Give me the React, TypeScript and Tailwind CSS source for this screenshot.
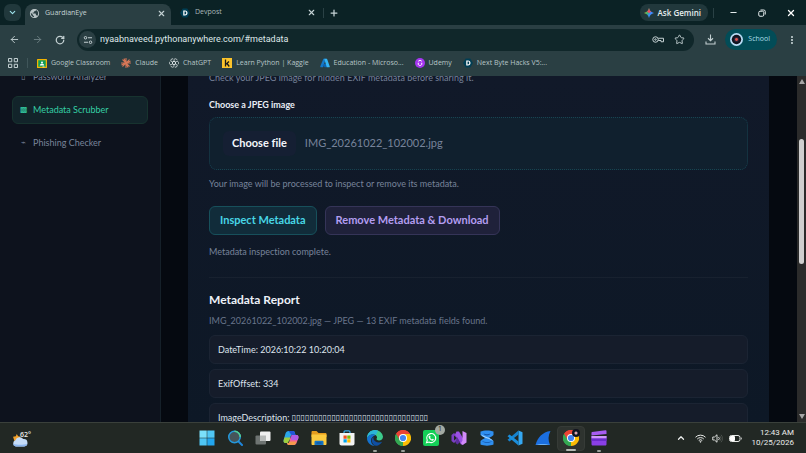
import { useRef, useState } from 'react'
import type { ReactNode } from 'react'
import {
  LuArrowLeft,
  LuArrowRight,
  LuChevronDown,
  LuChevronUp,
  LuMinus,
  LuPlus,
  LuRotateCw,
  LuStar,
  LuX
} from 'react-icons/lu'
import { MdMoreVert, MdPublic } from 'react-icons/md'

const NAV_ITEMS = [
  { id: 'password', label: 'Password Analyzer', glyph: '▯' },
  { id: 'metadata', label: 'Metadata Scrubber', glyph: '▩' },
  { id: 'phishing', label: 'Phishing Checker', glyph: '⌁' }
]

const FIELDS = [
  { name: 'DateTime', value: '2026:10:22 10:20:04' },
  { name: 'ExifOffset', value: '334' },
  { name: 'ImageDescription', value: '▯'.repeat(31), raw: true }
]

/* ---------- browser icons ---------- */

function DevpostIcon() {
  return (
    <svg viewBox="0 0 20 20" className="size-[10px] shrink-0">
      <path d="M5.5 1h9L20 10l-5.500 9h-9L0 10z" fill="#003e54" />
      <path d="M6.500 5h3.500c3.200 0 5 2 5 5s-1.800 5-5 5H6.500zM9 7.200v5.600h1c1.600 0 2.500-1 2.500-2.800S11.600 7.200 10 7.200z" fill="#fff" />
    </svg>
  )
}

function ClassroomIcon() {
  return (
    <svg viewBox="0 0 20 18" className="h-[9px] w-[10px] shrink-0">
      <rect width="20" height="18" rx="1" fill="#f4b400" />
      <rect x="2.500" y="2.500" width="15" height="13" fill="#0f9d58" />
      <circle cx="10" cy="7" r="2" fill="#fff" />
      <path d="M5.500 13c0-2.500 2-3.500 4.500-3.500s4.500 1 4.500 3.500z" fill="#fff" />
      <rect x="11" y="15" width="4" height="1.500" fill="#eee" />
    </svg>
  )
}

function ClaudeIcon() {
  return (
    <svg viewBox="0 0 20 20" className="size-[10px] shrink-0" stroke="#d97757" strokeWidth="2.200" strokeLinecap="round">
      <path d="M10 1v18M1 10h18M3.600 3.600l12.800 12.800M16.400 3.600L3.600 16.400M6.300 1.800l7.400 16.400M18.200 6.300L1.800 13.700" />
    </svg>
  )
}

function ChatGptIcon() {
  return (
    <svg viewBox="0 0 20 20" className="size-[10px] shrink-0" fill="none" stroke="#dfe6e7" strokeWidth="1.500">
      {[0, 60, 120, 180, 240, 300].map((a) => (
        <path key={a} d="M10 6.500V3.800c0-3 5.500-3.300 6.300.6M10 6.500l3 1.800v3.800" transform={`rotate(${a} 10 10)`} />
      ))}
    </svg>
  )
}

function KaggleIcon() {
  return (
    <svg viewBox="0 0 20 20" className="size-[10px] shrink-0">
      <rect width="20" height="20" fill="#fbc32b" />
      <path d="M7 3v14M14 7l-6 5.500M10 11l4.500 6" stroke="#1b1b1b" strokeWidth="2.600" fill="none" />
    </svg>
  )
}

function AzureIcon() {
  return (
    <svg viewBox="0 0 20 20" className="size-[10px] shrink-0">
      <path d="M6.700 1.500h5L6 18.500H1.500c-.8 0-1.300-.7-1-1.500z" fill="#1479c9" />
      <path d="M8 12h7.500l-2 6.500H9.500L5 15z" fill="#0b62b0" />
      <path d="M8.500 1.500h4.700c.4 0 .8.300 1 .7L19.500 17c.3.800-.3 1.500-1 1.500h-5z" fill="#35b5f4" />
    </svg>
  )
}

function UdemyIcon() {
  return (
    <svg viewBox="0 0 20 20" className="size-[10px] shrink-0">
      <circle cx="10" cy="10" r="10" fill="#a435f0" />
      <path d="M6.500 9.500V12c0 4 7 4 7 0V9.500M6.500 6.500L10 4.300l3.500 2.200" stroke="#fff" strokeWidth="2" fill="none" />
    </svg>
  )
}

function AppsIcon() {
  return (
    <svg viewBox="0 0 20 20" className="size-[10px]" fill="none" stroke="#c3d0d2" strokeWidth="2">
      <path d="M1 1h6.500v6.500H1zM12.500 1H19v6.500h-6.500zM1 12.500h6.500V19H1zM12.500 12.500H19V19h-6.500z" />
    </svg>
  )
}

function TuneIcon() {
  return (
    <svg viewBox="0 0 20 20" className="size-[10px]" fill="none" stroke="#c3d0d2" strokeWidth="2">
      <circle cx="5" cy="5.500" r="2.500" />
      <path d="M10 5.500h8M2 14.500h8" />
      <circle cx="15" cy="14.500" r="2.500" />
    </svg>
  )
}

function KeyIcon() {
  return (
    <svg viewBox="0 0 24 14" className="h-[7px] w-3" fill="none" stroke="#c3d0d2" strokeWidth="2">
      <circle cx="7" cy="7" r="5.500" />
      <circle cx="7" cy="7" r="1.500" />
      <path d="M12.500 4.500H23v7h-5V9h-5.500" />
    </svg>
  )
}

function DownloadIcon() {
  return (
    <svg viewBox="0 0 22 22" className="size-[11px]" fill="none" stroke="#c3d0d2" strokeWidth="2.200">
      <path d="M11 1v12M6 8.500l5 5 5-5M2 15v5h18v-5" />
    </svg>
  )
}

function RestoreIcon() {
  return (
    <svg viewBox="0 0 16 16" className="size-2" fill="none" stroke="#e4ebec" strokeWidth="2">
      <rect x="1.500" y="4.500" width="10" height="10" rx="2.500" />
      <path d="M5 2h6.500a3 3 0 0 1 3 3v6" />
    </svg>
  )
}

function GeminiIcon() {
  return (
    <svg viewBox="0 0 20 20" className="size-[10px]">
      <defs>
        <linearGradient id="gem" x1="0" y1="0.300" x2="1" y2="0.700">
          <stop offset="0" stopColor="#f6c02c" />
          <stop offset="0.350" stopColor="#3bb56d" />
          <stop offset="0.600" stopColor="#3b8bff" />
          <stop offset="1" stopColor="#4f8dff" />
        </linearGradient>
      </defs>
      <path d="M10 0c1.200 5.500 4.500 8.800 10 10-5.500 1.200-8.800 4.500-10 10-1.200-5.500-4.500-8.800-10-10 5.500-1.200 8.800-4.500 10-10z" fill="url(#gem)" />
      <path d="M10 0c.8 3.500 2.300 6 4.500 7.700L10 10 6 7.500C8 5.700 9.300 3.500 10 0z" fill="#ee4d5d" />
    </svg>
  )
}

function AvatarIcon() {
  return (
    <svg viewBox="0 0 26 26" className="size-[13px]">
      <circle cx="13" cy="13" r="13" fill="#b9dcf5" />
      <circle cx="13" cy="13" r="9.500" fill="#10131f" />
      <circle cx="13" cy="13" r="5" fill="#30243d" />
      <circle cx="13" cy="13" r="2.800" fill="#e4574f" />
    </svg>
  )
}

const BOOKMARKS = [
  { label: 'Google Classroom', icon: <ClassroomIcon /> },
  { label: 'Claude', icon: <ClaudeIcon /> },
  { label: 'ChatGPT', icon: <ChatGptIcon /> },
  { label: 'Learn Python | Kaggle', icon: <KaggleIcon /> },
  { label: 'Education - Microso...', icon: <AzureIcon /> },
  { label: 'Udemy', icon: <UdemyIcon /> },
  { label: 'Next Byte Hacks V5:...', icon: <DevpostIcon /> }
]

/* ---------- taskbar icons ---------- */

function ChromeIcon() {
  return (
    <svg viewBox="0 0 32 32" className="size-4">
      <path d="M16 16L2.100 8A16 16 0 0 1 29.900 8z" fill="#ea4335" />
      <path d="M16 16L29.900 8A16 16 0 0 1 16 32z" fill="#fbbc04" />
      <path d="M16 16v16A16 16 0 0 1 2.100 8z" fill="#34a853" />
      <path d="M16 8h13.900L22.900 20z" fill="#fbbc04" />
      <path d="M16 8h13.900A16 16 0 0 0 2.100 8l7 12z" fill="#ea4335" />
      <path d="M2.100 8l7 12 6.900 4-1 8A16 16 0 0 1 2.100 8z" fill="#34a853" />
      <circle cx="16" cy="16" r="8" fill="#fff" />
      <circle cx="16" cy="16" r="6.200" fill="#4285f4" />
    </svg>
  )
}

const TASKS: { name: string; running?: boolean; active?: boolean; badge?: string; icon: ReactNode }[] = [
  {
    name: 'Start',
    icon: (
      <svg viewBox="0 0 32 32" className="size-4">
        <path d="M1 1h14.500v14.500H1z" fill="#7be0fb" />
        <path d="M16.500 1H31v14.500H16.500z" fill="#50c7f5" />
        <path d="M1 16.500h14.500V31H1z" fill="#4fc6f5" />
        <path d="M16.500 16.500H31V31H16.500z" fill="#22a6ee" />
      </svg>
    )
  },
  {
    name: 'Search',
    icon: (
      <svg viewBox="0 0 32 32" className="size-4" fill="none">
        <path d="M22 22l8 8" stroke="#1f86dc" strokeWidth="4" strokeLinecap="round" />
        <circle cx="15" cy="14" r="11.500" fill="#46545a" stroke="#2499dc" strokeWidth="3" />
        <path d="M15 2.500A11.500 11.500 0 0 1 26.500 14" stroke="#55cf8d" strokeWidth="3" />
      </svg>
    )
  },
  {
    name: 'Task view',
    icon: (
      <svg viewBox="0 0 32 32" className="size-4">
        <rect x="1" y="11" width="21" height="18" rx="2" fill="#6e7472" />
        <rect x="10" y="3" width="21" height="19" rx="2" fill="#f0f0f0" />
        <path d="M10 11h12v11H12a2 2 0 0 1-2-2z" fill="#b7bab9" />
      </svg>
    )
  },
  {
    name: 'Copilot',
    icon: (
      <svg viewBox="0 0 32 32" className="size-4">
        <path d="M11 2h9c2 0 3 1 3.500 3l1.500 5h-6c-2 0-3 1-3.500 3l-3 10c-.6 2-1.500 3-3.500 3H5c-4 0-4.500-4-3.500-7l3.500-12C6 4 8 2 11 2z" fill="#2aa5e8" />
        <path d="M3 15l-1.500 5C.5 23 1 26 5 26h4c2 0 3-1 3.500-3l2.500-8z" fill="#9fce3e" />
        <path d="M11 2h9c2 0 3 1 3.500 3l1.500 5h-8z" fill="#2454d6" />
        <path d="M21 30h-9c-2 0-3-1-3.500-3l-.5-1h1c2 0 3-1 3.500-3l3-10c.5-2 1.500-3 3.500-3h8c4 0 4.500 4 3.500 7l-3.500 9c-1 3-3 4-6 4z" fill="#f0609a" />
        <path d="M19 10h8c4 0 4.500 4 3.500 7l-1 3H17l-1.500-7c.5-2 1.500-3 3.500-3z" fill="#b05ce6" />
        <path d="M21 30h-9c-2 0-3-1-3.500-3l-.5-1h1c2 0 3-1 3.500-3h14.500c-1 4-3 7-6 7z" fill="#f79a4c" />
        <path d="M14.500 17l3-7h1c-1.500 0-2.500 1-3 3l-3 10c-.5 2-1.500 3-3 3z" fill="#222824" />
      </svg>
    )
  },
  {
    name: 'File Explorer',
    icon: (
      <svg viewBox="0 0 32 32" className="size-4">
        <path d="M1 4c0-1 .8-2 2-2h8l4 4h14c1.200 0 2 1 2 2v6H1z" fill="#e69d1e" />
        <path d="M1 9h30v19c0 1-.8 2-2 2H3c-1.200 0-2-1-2-2z" fill="#fccb3f" />
        <path d="M7 30v-6c0-1.500 1-2.500 2.500-2.500h13c1.500 0 2.500 1 2.500 2.500v6z" fill="#1674c4" />
        <path d="M11 26h10" stroke="#0c4f92" strokeWidth="2" />
      </svg>
    )
  },
  {
    name: 'Microsoft Store',
    icon: (
      <svg viewBox="0 0 32 32" className="size-4">
        <path d="M10 7V4c0-1.500 1-2.500 2.500-2.500h7C21 1.500 22 2.500 22 4v3" stroke="#39a8e5" strokeWidth="2.500" fill="none" />
        <path d="M1 6h30v21c0 2-1.500 4-4 4H5c-2.500 0-4-2-4-4z" fill="#f3f3f3" />
        <path d="M9 11h6.500v6.500H9z" fill="#f25022" />
        <path d="M16.500 11H23v6.500h-6.500z" fill="#7fba00" />
        <path d="M9 18.500h6.500V25H9z" fill="#00a4ef" />
        <path d="M16.500 18.500H23V25h-6.500z" fill="#ffb900" />
      </svg>
    )
  },
  {
    name: 'Edge',
    running: true,
    icon: (
      <svg viewBox="0 0 32 32" className="size-4">
        <path d="M16 0a16 16 0 0 1 16 13c0 5-3.500 8-8 8-3 0-5-1.500-5-3 0-1 1-1.500 1-3.500 0-3-3.500-6-8-6C6 8.500 1.500 12 0 17 0 7 7 0 16 0z" fill="#3ccb8c" />
        <path d="M16 0C7 0 0 7 0 17c1.500-5 6-8.500 12-8.500 2 0 4 .7 5.500 1.800L22 1.200C20 .4 18 0 16 0z" fill="#2bb4d8" />
        <path d="M12 8.500C5 8.500 0 13.500 0 18c1 8 8 14 16 14-6-2-8-7-8-11 0-5 3-8 8-10-1-1.500-2.500-2.500-4-2.500z" fill="#1372cf" />
        <path d="M13 14c-3 2-4 5-3.500 8C10.500 28 15 32 20 31.500c4-1 8-4 10-8-7 3-15 .5-17-5z" fill="#0f4fa3" />
      </svg>
    )
  },
  { name: 'Chrome', running: true, icon: <ChromeIcon /> },
  {
    name: 'WhatsApp',
    badge: '1',
    icon: (
      <svg viewBox="0 0 32 32" className="size-4">
        <rect width="32" height="32" rx="4" fill="#14cf57" />
        <path d="M7 25.500l1.500-5a9 9 0 1 1 3.500 3.500z" fill="none" stroke="#fff" strokeWidth="2.200" />
        <path d="M12.500 11.500l1.700.2 1 2.500-1 1.300c.8 1.600 2 2.700 3.600 3.400l1.300-1.300 2.500 1.100c.2 2-1.200 2.800-2.700 2.600-4-.6-7.500-4-7.800-7.300-.1-1 .5-2 1.400-2.500z" fill="#fff" />
      </svg>
    )
  },
  {
    name: 'Visual Studio',
    icon: (
      <svg viewBox="0 0 32 32" className="size-4">
        <path d="M1 10l5-4 7 6v8l-7 6-5-4z" fill="#7b3fc4" />
        <path d="M6 11v10l6-5z" fill="#222924" />
        <path d="M11 3h5l12 20-3 6h-5L8 9z" fill="#9b50e4" />
        <path d="M23 2l8 4v19l-8 5-3-4 3-5z" fill="#d38bfa" />
        <path d="M12 14l6 10-5 5-4-3z" fill="#5d2e9f" />
      </svg>
    )
  },
  {
    name: 'Terminal',
    icon: (
      <svg viewBox="0 0 32 32" className="size-4">
        <path d="M3 3c6-3 20-3 26 0v7c-3 3-6 4-9 6 3 2 6 3 9 6v7c-6 3-20 3-26 0v-7c3-3 6-4 9-6-3-2-6-3-9-6z" fill="#2f8ff0" />
        <path d="M4 8c5 6 20 6 24 14-6-5-20-5-24-14z" fill="#a5d5ff" />
        <path d="M9 7c4 2 10 2 14 0-2 5-12 5-14 0z" fill="#1355a8" />
        <path d="M5 21c6 4 16 4 22 1-4 5-18 5-22-1z" fill="#1355a8" />
      </svg>
    )
  },
  {
    name: 'Visual Studio Code',
    icon: (
      <svg viewBox="0 0 32 32" className="size-4">
        <path d="M23 1l8 3.500v23L23 31z" fill="#35a8f2" />
        <path d="M23 1v8L5 23l-4-3.500z" fill="#1583cf" />
        <path d="M23 31v-8L5 9l-4 3.500z" fill="#1b8edb" />
      </svg>
    )
  },
  {
    name: 'Wireshark',
    icon: (
      <svg viewBox="0 0 32 32" className="size-4">
        <path d="M1 30C5 15 15 4 31 2c-5 9-5 19-1 28z" fill="#1b6fe0" />
        <path d="M1 30c7-3 21-3 29 0z" fill="#6ab2f7" />
      </svg>
    )
  },
  {
    name: 'Chrome School profile',
    active: true,
    icon: (
      <span className="relative">
        <ChromeIcon />
        <svg viewBox="0 0 16 16" className="absolute -top-px -right-px size-2">
          <circle cx="8" cy="8" r="8" fill="#10131f" />
          <circle cx="8" cy="8" r="3" fill="#d9d5e8" />
          <circle cx="8" cy="8" r="1.500" fill="#e4574f" />
        </svg>
      </span>
    )
  },
  {
    name: 'Clipchamp',
    running: true,
    icon: (
      <svg viewBox="0 0 32 32" className="size-4">
        <path d="M2 4l27-3.500c1 0 2 .5 2 1.500v6L1 11V6c0-1 .3-1.800 1-2z" fill="#a85cf2" />
        <path d="M1 12h30v16c0 2-1 3-3 3H4c-2 0-3-1-3-3z" fill="#8a3fe6" />
        <path d="M1 12h30v5H1z" fill="#cf97fb" />
        <path d="M1 17h30v5H1z" fill="#6b2bc9" />
      </svg>
    )
  }
]

function WeatherIcon() {
  return (
    <svg viewBox="0 0 34 28" className="h-[13px] w-4">
      <path d="M2 6l6-1 2-5 3 5 6 1-4 6-10 3z" fill="#f2a12c" />
      <path d="M8 27a7 7 0 0 1-1-13.500A9.500 9.500 0 0 1 24 11a8 8 0 0 1 2 16z" fill="#c5dcf8" />
      <path d="M2 21a7 7 0 0 0 6 6h18a8 8 0 0 0 7-6c-8 3-24 3-31 0z" fill="#8db6ee" />
    </svg>
  )
}

function WifiIcon() {
  return (
    <svg viewBox="0 0 22 18" className="h-[9px] w-[11px]" fill="none" stroke="#e9ebe9" strokeWidth="2">
      <path d="M1 6.500a14 14 0 0 1 20 0M4.500 10a9 9 0 0 1 13 0M7.500 13a5 5 0 0 1 7 0" />
      <circle cx="11" cy="15.500" r="1" />
    </svg>
  )
}

function SpeakerIcon() {
  return (
    <svg viewBox="0 0 22 18" className="h-[9px] w-[11px]" fill="none" stroke="#e9ebe9" strokeWidth="1.800">
      <path d="M1.500 6v6h3.500l5 4.500v-15L5 6z" />
      <path d="M13 6a4 4 0 0 1 0 6" />
      <path d="M15.500 3.500a8 8 0 0 1 0 11M18 1.500a11 11 0 0 1 0 15" stroke="#4f5550" />
    </svg>
  )
}

function BatteryIcon() {
  return (
    <svg viewBox="0 0 26 14" className="h-[7px] w-[13px]">
      <rect x="1" y="1" width="21" height="12" rx="4" fill="none" stroke="#e9ebe9" strokeWidth="2" />
      <rect x="2" y="2" width="10" height="10" rx="2" fill="#fff" />
      <path d="M24 4.500c2 .5 2 4.500 0 5z" fill="#e9ebe9" />
    </svg>
  )
}

/* ---------- browser chrome ---------- */

function TabStrip() {
  return (
    <div className="flex h-[25px] items-center bg-[#0b2225] pl-1 text-[#c6d3d5]">
      <button aria-label="Search tabs" className="flex h-[17px] w-[17px] items-center justify-center rounded-md bg-[#21383c]">
        <LuChevronDown className="size-[9px] text-[#9fe3ec]" strokeWidth={3} />
      </button>
      <div className="ml-1 flex h-[21px] w-[146px] items-center self-end rounded-t-lg bg-[#2a3f43] pr-[5px] pb-[3px] pl-1">
        <MdPublic className="size-[11px] text-[#b9c4c6]" />
        <span className="ml-[5px] flex-1 text-[7px]">GuardianEye</span>
        <button aria-label="Close GuardianEye tab">
          <LuX className="size-[9px]" strokeWidth={3} />
        </button>
      </div>
      <div className="ml-[9px] flex w-[143px] items-center">
        <DevpostIcon />
        <span className="ml-[5px] flex-1 text-[7px] text-[#a9b8ba]">Devpost</span>
        <button aria-label="Close Devpost tab" className="mr-[7px]">
          <LuX className="size-[9px]" strokeWidth={3} />
        </button>
      </div>
      <span className="h-[10px] w-px bg-[#2a4145]" />
      <button aria-label="New tab" className="ml-[5px]">
        <LuPlus className="size-[10px]" strokeWidth={3} />
      </button>
      <div className="ml-auto flex items-center">
        <button className="flex h-[17px] items-center gap-1 rounded-lg bg-[#21383c] px-1 pr-[7px] text-[8px] font-semibold text-[#e6eeef]">
          <GeminiIcon />
          Ask Gemini
        </button>
        <span className="ml-[5px] h-[10px] w-px bg-[#2a4145]" />
        <button aria-label="Minimize" className="ml-[15px]">
          <LuMinus className="size-[9px] text-[#e4ebec]" strokeWidth={3} />
        </button>
        <button aria-label="Restore" className="ml-5">
          <RestoreIcon />
        </button>
        <button aria-label="Close window" className="mr-[10px] ml-5">
          <LuX className="size-[10px] text-white" strokeWidth={3} />
        </button>
      </div>
    </div>
  )
}

function Toolbar() {
  const [url, setUrl] = useState('nyaabnaveed.pythonanywhere.com/#metadata')
  return (
    <div className="flex h-[29px] items-center bg-[#2a3f43] pl-[9px] text-[#c3d0d2]">
      <button aria-label="Back">
        <LuArrowLeft className="size-[11px]" strokeWidth={2} />
      </button>
      <button aria-label="Forward" className="ml-3 text-[#6d8083]">
        <LuArrowRight className="size-[11px]" strokeWidth={2} />
      </button>
      <button aria-label="Reload" className="ml-3">
        <LuRotateCw className="size-[10px]" strokeWidth={3} />
      </button>
      <div className="ml-3 flex h-[22px] flex-1 items-center rounded-full bg-[#10272a] pr-[9px] pl-[2px]">
        <button aria-label="Site information" className="flex size-[17px] items-center justify-center rounded-full bg-[#2a3f43]">
          <TuneIcon />
        </button>
        <input
          aria-label="Address"
          value={url}
          onChange={(e) => setUrl(e.target.value)}
          className="ml-1 flex-1 bg-transparent font-['Roboto',sans-serif] text-[9px] text-[#dfe8e9] outline-none"
        />
        <button aria-label="Passwords">
          <KeyIcon />
        </button>
        <button aria-label="Bookmark this page" className="ml-[10px]">
          <LuStar className="size-[11px]" strokeWidth={2} />
        </button>
      </div>
      <button aria-label="Downloads" className="ml-[11px]">
        <DownloadIcon />
      </button>
      <button className="ml-[9px] flex h-[21px] items-center gap-[5px] rounded-full bg-[#024c57] pr-[7px] pl-[5px] text-[7px] text-[#a9dfe8]">
        <AvatarIcon />
        School
      </button>
      <button aria-label="Menu" className="mr-2 ml-[9px]">
        <MdMoreVert className="size-3" />
      </button>
    </div>
  )
}

function BookmarksBar() {
  return (
    <nav className="flex h-[22px] items-center bg-[#2a3f43] pb-[4px] pl-2 text-[7px] text-[#b7c5c7]">
      <button aria-label="All apps">
        <AppsIcon />
      </button>
      <span className="ml-[9px] h-[10px] w-px bg-[#40565a]" />
      <div className="ml-[9px] flex gap-[11px]">
        {BOOKMARKS.map((b) => (
          <a key={b.label} href="#" className="flex items-center gap-1 whitespace-nowrap">
            {b.icon}
            {b.label}
          </a>
        ))}
      </div>
    </nav>
  )
}

/* ---------- GuardianEye page ---------- */

function Sidebar() {
  const [active, setActive] = useState('metadata')
  return (
    <aside className="w-[161px] shrink-0 border-r border-[#152029] bg-[#0d121d] px-3">
      <nav className="-mt-[13px] flex flex-col gap-[5px]">
        {NAV_ITEMS.map((item) => (
          <a
            key={item.id}
            href={`#${item.id}`}
            onClick={() => setActive(item.id)}
            className={`flex h-7 items-center gap-[6px] rounded-md border px-[7px] text-[9px] ${
              active === item.id
                ? 'border-[#17332f] bg-[#12242a] text-[#35cfa5]'
                : 'border-transparent text-[#78849a]'
            }`}
          >
            <span className="w-[7px] text-center font-['DejaVu_Sans',sans-serif] text-[8px]">{item.glyph}</span>
            {item.label}
          </a>
        ))}
      </nav>
    </aside>
  )
}

function MetadataScrubber() {
  const fileRef = useRef<HTMLInputElement>(null)
  const [fileName, setFileName] = useState('IMG_20261022_102002.jpg')

  return (
    <section className="flex-1 bg-linear-to-b from-[#111929] to-[#0d1826] px-[21px] text-[#77839a]">
      <p className="-mt-[5px] text-[9px] leading-[14px]">Check your JPEG image for hidden EXIF metadata before sharing it.</p>

      <label htmlFor="jpeg" className="mt-[13px] block text-[9px] leading-[14px] font-bold text-[#e8edf6]">
        Choose a JPEG image
      </label>
      <div className="mt-[5px] flex h-[53px] items-center rounded-lg border border-dotted border-[#184452] bg-[#10202e] px-[13px]">
        <input
          id="jpeg"
          ref={fileRef}
          type="file"
          accept="image/jpeg"
          className="hidden"
          onChange={(e) => setFileName(e.target.files?.[0]?.name ?? fileName)}
        />
        <button
          onClick={() => fileRef.current?.click()}
          className="h-[25px] rounded-md bg-[#151f33] px-[9px] text-[11px] font-bold text-[#f3f6fb]"
        >
          Choose file
        </button>
        <span className="ml-[9px] text-[11px]">{fileName}</span>
      </div>
      <p className="mt-[7px] text-[9px] leading-[14px]">Your image will be processed to inspect or remove its metadata.</p>

      <div className="mt-[15px] flex gap-2">
        <button className="h-[29px] rounded-md border border-[#17505b] bg-[#112c3a] px-[10px] text-[11px] font-bold text-[#48d6e5]">
          Inspect Metadata
        </button>
        <button className="h-[29px] rounded-md border border-[#353458] bg-[#1f213a] px-[10px] text-[11px] font-bold text-[#b39df0]">
          Remove Metadata &amp; Download
        </button>
      </div>
      <p className="mt-[10px] text-[9px] leading-[14px]">Metadata inspection complete.</p>

      <div className="mt-[18px] border-t border-[#18212f] pt-[14px]">
        <h2 className="text-[12px] leading-4 font-bold text-[#edf1f8]">Metadata Report</h2>
        <p className="mt-[6px] text-[9px] leading-[14px] text-[#69758b]">
          IMG_20261022_102002.jpg — JPEG — 13 EXIF metadata fields found.
        </p>
        <ul className="mt-[7px] flex flex-col gap-[5px]">
          {FIELDS.map((f) => (
            <li
              key={f.name}
              className="flex h-[29px] items-center rounded-md border border-[#1b2433] bg-[#151c2a] px-2 text-[9px] text-[#dfe4ed]"
            >
              {f.name}:&nbsp;
              <span className={f.raw ? "font-['DejaVu_Sans',sans-serif] text-[8px]" : ''}>{f.value}</span>
            </li>
          ))}
        </ul>
      </div>
    </section>
  )
}

function Scrollbar() {
  return (
    <div className="flex w-[9px] shrink-0 flex-col items-center bg-[#2b2b2b] py-[3px]">
      <svg viewBox="0 0 10 8" className="h-[5px] w-[6px]">
        <path d="M5 0l5 8H0z" fill="#a5a5a5" />
      </svg>
      <div className="mt-[55px] h-[125px] w-[5px] rounded-full bg-[#cfcfcf]" />
      <svg viewBox="0 0 10 8" className="mt-auto h-[5px] w-[6px]">
        <path d="M5 8L0 0h10z" fill="#a5a5a5" />
      </svg>
    </div>
  )
}

/* ---------- taskbar ---------- */

function Taskbar() {
  return (
    <footer className="flex h-[31px] shrink-0 items-center border-t border-[#3a403b] bg-[#222824] text-[#eceeec]">
      <div className="flex flex-1 items-center pl-3">
        <span className="mt-1">
          <WeatherIcon />
        </span>
        <span className="-ml-2 self-start text-[7px] leading-[9px] font-semibold">62°</span>
      </div>
      <div className="flex">
        {TASKS.map((t) => (
          <button
            key={t.name}
            aria-label={t.name}
            className={`relative flex h-[25px] w-7 items-center justify-center rounded ${t.active ? 'border border-[#363b37] bg-[#2e332f]' : ''}`}
          >
            {t.icon}
            {t.badge && (
              <span className="absolute -top-px right-0 flex size-[10px] items-center justify-center rounded-full bg-[#a3aaa3] text-[7px] text-[#1c211d]">
                {t.badge}
              </span>
            )}
            {t.running && <span className="absolute -bottom-px h-[2px] w-1 rounded-full bg-[#9aa09b]" />}
            {t.active && <span className="absolute -bottom-px h-[2px] w-[10px] rounded-full bg-[#b5bab5]" />}
          </button>
        ))}
      </div>
      <div className="flex flex-1 items-center justify-end pr-3">
        <button aria-label="Show hidden icons">
          <LuChevronUp className="size-[10px]" strokeWidth={3} />
        </button>
        <div className="ml-[9px] flex items-center gap-[6px]">
          <WifiIcon />
          <SpeakerIcon />
          <BatteryIcon />
        </div>
        <div className="ml-[9px] text-right font-['Roboto',sans-serif] text-[8px] leading-[10px]">
          <div>12:43 AM</div>
          <div>10/25/2026</div>
        </div>
      </div>
    </footer>
  )
}

export default function App() {
  return (
    <div className="flex h-screen flex-col overflow-hidden font-['Open_Sans',sans-serif]">
      <header className="shrink-0">
        <TabStrip />
        <Toolbar />
        <BookmarksBar />
      </header>
      <div className="flex min-h-0 flex-1 overflow-hidden bg-[#050910] font-['Lato',sans-serif] [font-variant-ligatures:none]">
        <Sidebar />
        <main className="flex min-w-0 flex-1 pr-7 pl-[27px]">
          <MetadataScrubber />
        </main>
        <Scrollbar />
      </div>
      <Taskbar />
    </div>
  )
}
